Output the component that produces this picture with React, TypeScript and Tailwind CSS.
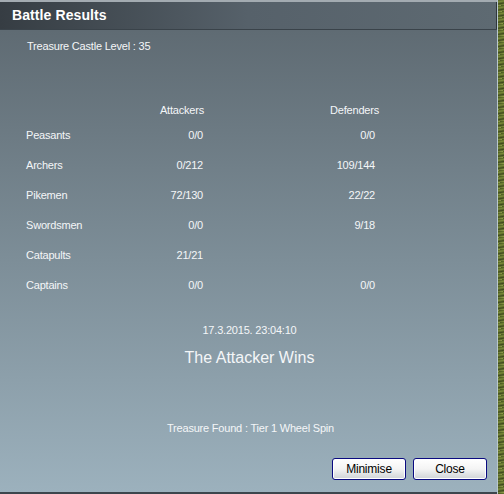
import React from 'react';

const rows = [
  { name: 'Peasants', att: '0/0', def: '0/0' },
  { name: 'Archers', att: '0/212', def: '109/144' },
  { name: 'Pikemen', att: '72/130', def: '22/22' },
  { name: 'Swordsmen', att: '0/0', def: '9/18' },
  { name: 'Catapults', att: '21/21', def: '' },
  { name: 'Captains', att: '0/0', def: '0/0' },
];

const font = { fontFamily: '"Liberation Sans", Arial, sans-serif' };

function WinButton({ label }: { label: string }) {
  return (
    <button className="w-[74px] h-[22px] rounded-[3px] border border-[#0a0a80] bg-gradient-to-b from-[#ffffff] via-[#f4f4f4] to-[#cfd3d6] shadow-[inset_0_0_0_1px_#ffffff] text-[12px] text-black leading-none">
      {label}
    </button>
  );
}

export default function App() {
  return (
    <div className="flex w-[504px] h-[494px] overflow-hidden" style={font}>
      <div className="flex flex-col w-[497px] h-full">
        <div className="h-[2px] bg-[#a3abb1]" />
        <div className="h-[27px] flex items-center pl-[12px] bg-gradient-to-r from-[#363d43] via-[#56616a] to-[#5e6a72] border-r border-[#2f363b]">
          <span className="text-[14px] font-bold text-white tracking-[0.1px]">Battle Results</span>
        </div>
        <div className="h-[1px] bg-[#3a434a]" />
        <div className="flex-1 flex flex-col bg-gradient-to-b from-[#5f6b73] via-[#7d8e98] to-[#9cb1bd] text-[11px] tracking-[-0.2px] leading-[15px] text-[#f4f6f8]">
          <div className="pt-[9px] pl-[27px]">Treasure Castle Level : 35</div>

          <div className="mt-[49px] pl-[26px] grid grid-cols-[120px_57px_172px]">
            <div />
            <div className="text-right -mr-[1px]">Attackers</div>
            <div className="text-right -mr-[4px]">Defenders</div>
          </div>

          <div className="mt-[2px] pl-[26px] flex flex-col">
            {rows.map((r) => (
              <div key={r.name} className="h-[30px] grid grid-cols-[120px_57px_172px] items-center">
                <div>{r.name}</div>
                <div className="text-right">{r.att}</div>
                <div className="text-right">{r.def}</div>
              </div>
            ))}
          </div>

          <div className="mt-[23px] text-center pl-[2px]">17.3.2015. 23:04:10</div>
          <div className="mt-[10px] text-center text-[16px] tracking-normal leading-[20px] pl-[2px]">The Attacker Wins</div>
          <div className="mt-[53px] text-center pl-[4px]">Treasure Found : Tier 1 Wheel Spin</div>

          <div className="mt-[22px] flex justify-end gap-[7px] pr-[10px]">
            <WinButton label="Minimise" />
            <WinButton label="Close" />
          </div>
        </div>
        <div className="h-[2px] bg-[#3c464d]" />
      </div>
      <div className="w-[1px] h-full bg-[#b9c7cf]" />
      <div className="flex-1 h-full bg-[repeating-linear-gradient(170deg,#4c5c22_0px,#7a8a3a_2px,#3e4a1c_4px,#8c9a48_6px)]" />
    </div>
  );
}
